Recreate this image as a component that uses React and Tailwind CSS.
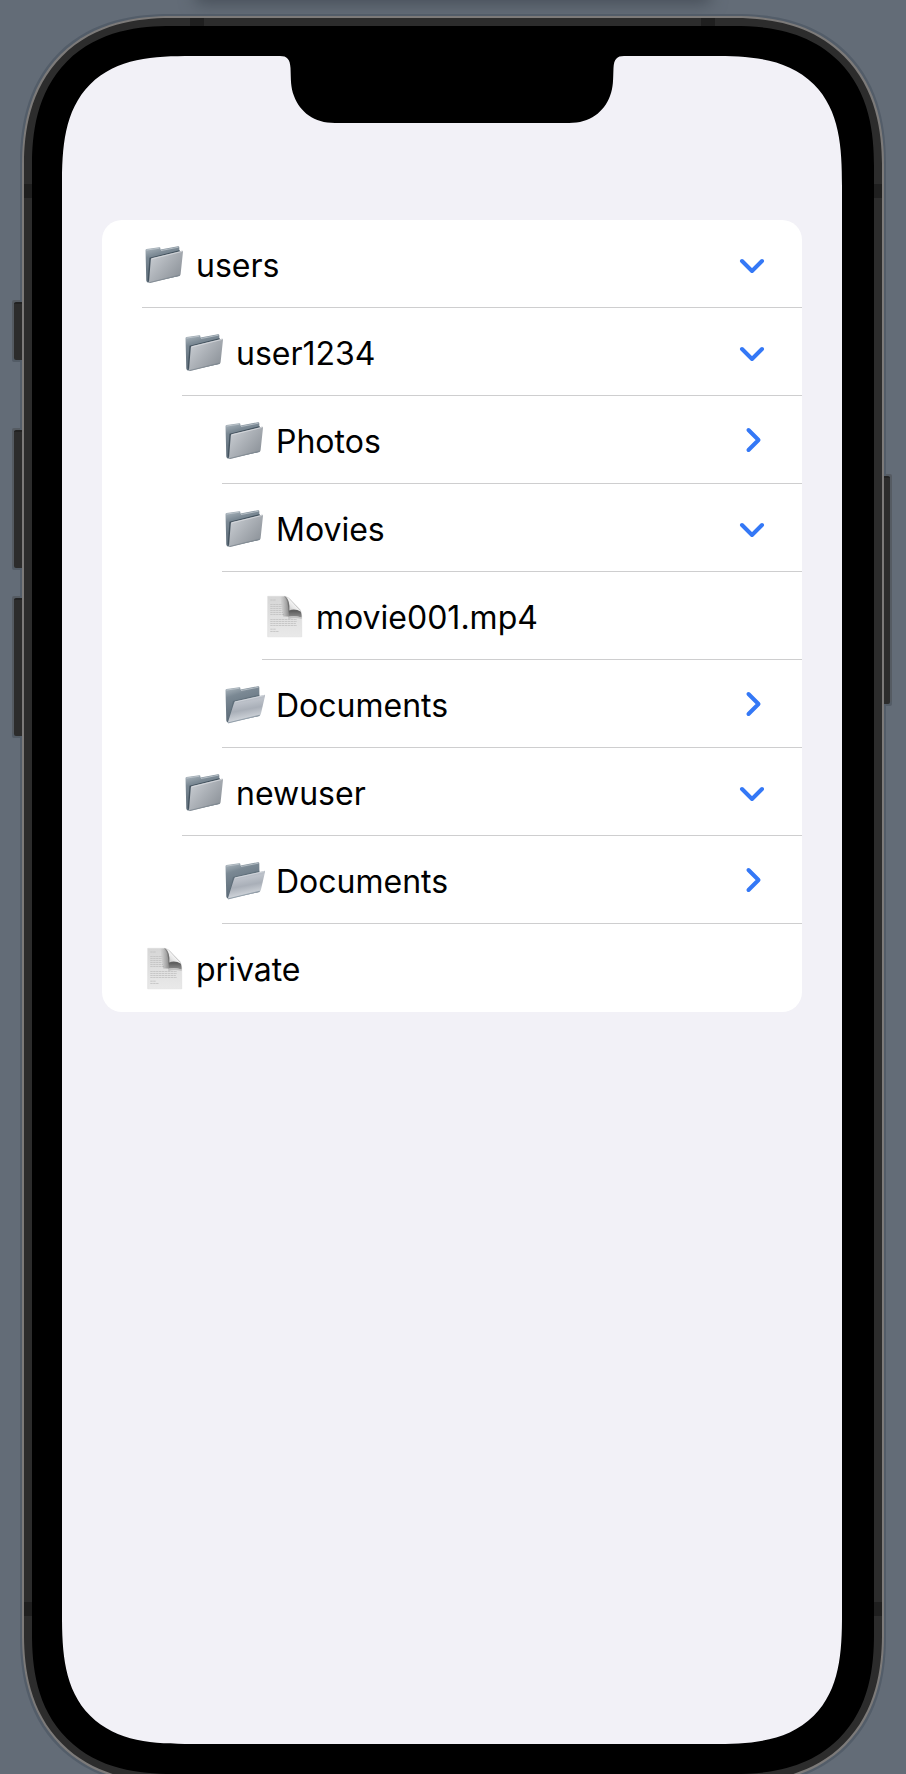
import React, { useId, useState } from 'react';

const entries = [
  { id: 'users', name: 'users', depth: 0, icon: 'folder', chevron: 'down' },
  { id: 'user1234', name: 'user1234', depth: 1, icon: 'folder', chevron: 'down' },
  { id: 'photos', name: 'Photos', depth: 2, icon: 'folder', chevron: 'right' },
  { id: 'movies', name: 'Movies', depth: 2, icon: 'folder', chevron: 'down' },
  { id: 'movie001', name: 'movie001.mp4', depth: 3, icon: 'file' },
  { id: 'docs1', name: 'Documents', depth: 2, icon: 'open', chevron: 'right' },
  { id: 'newuser', name: 'newuser', depth: 1, icon: 'folder', chevron: 'down' },
  { id: 'docs2', name: 'Documents', depth: 2, icon: 'open', chevron: 'right' },
  { id: 'private', name: 'private', depth: 0, icon: 'file' },
];

const indents = ['pl-10', 'pl-20', 'pl-[120px]', 'pl-40'];

function FolderIcon({ open }) {
  const id = useId();
  return (
    <svg viewBox="0 0 42 44" className="h-11 w-[42px] shrink-0 overflow-visible" aria-hidden="true">
      <defs>
        <linearGradient id={id + 'back'} x1="0" y1="0" x2="0.3" y2="1">
          <stop offset="0" stopColor="#b4bec5" />
          <stop offset="0.3" stopColor="#7b8994" />
          <stop offset="1" stopColor="#566572" />
        </linearGradient>
        <linearGradient id={id + 'front'} x1="0" y1="0.1" x2="1" y2="0.9">
          <stop offset="0" stopColor="#ccd0d5" />
          <stop offset="0.45" stopColor="#acb1b7" />
          <stop offset="1" stopColor="#878d94" />
        </linearGradient>
        <linearGradient id={id + 'flap'} x1="0" y1="0" x2="0.25" y2="1">
          <stop offset="0" stopColor="#a2a9b3" />
          <stop offset="0.35" stopColor="#bcc1c9" />
          <stop offset="0.6" stopColor="#a9afb8" />
          <stop offset="1" stopColor="#d9dde2" />
        </linearGradient>
      </defs>
      <path d="M3.5 8.2 Q3.5 7.3 4.4 7.1 L17.2 5.2 Q18.3 5 18.4 6.2 V7.6 L36 4.2 Q37.2 4 37.3 5.2 L37.6 34 L7 40.6 Q4.6 40.8 4.3 38.4 Z" fill={`url(#${id}back)`} />
      <path d="M4.5 8.1 L17.3 6.2 M19 8.5 L36.6 5.2" stroke="#c1c9cf" strokeWidth="0.8" />
      {open ? (
        <>
          <path d="M11 19 L37.4 12.8 L36.6 33.2 L6 41Z" fill="#596874" opacity="0.7" />
          <path d="M12.2 20.4 Q12.5 19.5 13.4 19.3 L42 12.9 Q43.3 12.7 43 13.9 L38.8 32.2 Q38.5 33.3 37.3 33.6 L7.1 41.2 Q5.7 41.4 6 40 Z" fill={`url(#${id}flap)`} />
          <path d="M12.8 20.1 L42.3 13.5" stroke="#d7dbdf" strokeWidth="0.8" />
          <path d="M6 40.9 L37.7 33.2" stroke="#8b98a4" strokeWidth="0.9" />
        </>
      ) : (
        <>
          <path d="M7.5 15.8 L37.3 8.2 L38.8 9.4 L8.5 40.6 L5.8 38Z" fill="#43525e" />
          <path d="M8.8 17.5 Q9 16.4 10 16.1 L39.8 8.7 Q41.2 8.4 41 9.7 L38.6 32.3 Q38.5 33.4 37.3 33.7 L8.2 40.9 Q6.8 41.2 7 39.8 Z" fill={`url(#${id}front)`} />
          <path d="M9.5 17 L40.5 9.3" stroke="#d9dcdf" strokeWidth="0.8" />
          <path d="M7.4 40.6 L37.8 33.1" stroke="#7b858e" strokeWidth="0.8" />
        </>
      )}
    </svg>
  );
}

function FileIcon() {
  const id = useId();
  return (
    <svg viewBox="0 0 42 44" className="h-11 w-[42px] shrink-0" aria-hidden="true">
      <defs>
        <linearGradient id={id + 'page'} x1="0" y1="0" x2="0" y2="1">
          <stop offset="0" stopColor="#d6d6d6" />
          <stop offset="1" stopColor="#e9e9e9" />
        </linearGradient>
        <linearGradient id={id + 'shade'} x1="0" y1="0" x2="1" y2="0">
          <stop offset="0" stopColor="#888" stopOpacity="0" />
          <stop offset="1" stopColor="#6e6e6e" />
        </linearGradient>
        <linearGradient id={id + 'fold'} x1="0" y1="0" x2="0" y2="1">
          <stop offset="0" stopColor="#8a8a8a" />
          <stop offset="0.7" stopColor="#5e5e5e" />
          <stop offset="1" stopColor="#8f8f8f" />
        </linearGradient>
        <linearGradient id={id + 'curl'} x1="0.1" y1="0.9" x2="0.5" y2="0.45">
          <stop offset="0" stopColor="#b8b8b8" />
          <stop offset="0.6" stopColor="#e4e4e4" />
          <stop offset="1" stopColor="#f4f4f4" />
        </linearGradient>
      </defs>
      <path d="M5.7 2.3 H22.5 Q25.5 3 28 5 L38 15.5 Q39.7 18 39.7 22 V42.8 H5.7Z" fill={`url(#${id}page)`} stroke="#dcdcdc" strokeWidth="0.6" />
      <path d="M8.3 6 H14 M8.3 10.5 H20 M8.3 12.5 H20 M8.3 14.5 H20 M8.3 16.5 H20 M8.3 18.5 H21 M8.3 20.5 H22 M8.3 25.5 H35 M8.3 27.5 H35 M8.3 29.5 H34 M8.3 31.5 H35 M8.3 35.2 H14 M8.3 37.5 H17" stroke="#c0c0c0" strokeWidth="0.8" strokeDasharray="2.4 0.5" />
      <path d="M18 2.5 H23 Q27 5 26.5 22.5 H21Z" fill={`url(#${id}shade)`} opacity="0.7" />
      <path d="M22 2.3 Q27 6 26.3 22.7 Q33 20.8 39.7 23.4 Q39.7 18 37.5 15.7 L27.5 5 Q25 2.6 22 2.3Z" fill={`url(#${id}fold)`} />
      <path d="M24 2.8 Q28.2 7 27.3 16.5 Q33 14 39 17.8 L37.5 15.7 L27.5 5 Q26 3.300 24 2.800Z" fill={`url(#${id}curl)`} />
      <path d="M26.3 22.700 Q33 20.8 39.7 23.400 V25 Q33 23.2 26.3 25Z" fill="#b5b5b5" opacity="0.7" />
    </svg>
  );
}

function Chevron({ direction }) {
  return (
    <svg viewBox="0 0 28 28" className="size-7 shrink-0" fill="none" stroke="#3478f6" strokeWidth="4" strokeLinecap="round" strokeLinejoin="round" aria-hidden="true">
      {direction === 'down' ? <path d="M4 11 L14 21 L24 11" /> : <path d="M10.5 4 L20.5 14 L10.5 24" />}
    </svg>
  );
}

function Row({ entry, last, selected, onSelect }) {
  return (
    <li className={indents[entry.depth]}>
      <button
        type="button"
        aria-pressed={selected}
        onClick={onSelect}
        className={`flex h-22 w-full items-center gap-3 pr-9 text-left text-[32px] leading-10 text-black ${last ? '' : 'border-b border-[#cececf]'}`}
      >
        {entry.icon === 'file' ? <FileIcon /> : <FolderIcon open={entry.icon === 'open'} />}
        <span className="flex-1 pt-1">{entry.name}</span>
        {entry.chevron && <Chevron direction={entry.chevron} />}
      </button>
    </li>
  );
}

export default function App() {
  const [selected, setSelected] = useState(null);
  return (
    <main className="relative flex min-h-screen flex-col overflow-hidden bg-[#636c77] px-[22px] pt-4 font-['Inter',sans-serif]">
      <div className="absolute inset-x-[200px] bottom-full h-5 shadow-[0_0_16px_4px_#48505a]" />
      <div className="relative -mb-2.5 flex flex-1 flex-col">
        <div className="flex flex-1 flex-col overflow-hidden rounded-[150px] border-2 border-[#7c7a79] bg-[#2c2c2c] bg-[linear-gradient(to_bottom,transparent_166px,#1f1f1f_166px,#1f1f1f_180px,transparent_180px,transparent_calc(100%-180px),#1f1f1f_calc(100%-180px),#1f1f1f_calc(100%-166px),transparent_calc(100%-166px)),linear-gradient(to_right,transparent_166px,#1f1f1f_166px,#1f1f1f_180px,transparent_180px,transparent_calc(100%-181px),#1f1f1f_calc(100%-181px),#1f1f1f_calc(100%-167px),transparent_calc(100%-167px))] p-2 shadow-[0_0_0_2px_#535d69] [corner-shape:superellipse(1.22)]">
          <div className="flex flex-1 flex-col rounded-[140px] bg-black py-[30px] pr-8 pl-[30px] [corner-shape:superellipse(1.26)]">
            <div className="flex flex-1 flex-col rounded-[130px] bg-[#f2f1f7] px-10 pb-10 [corner-shape:superellipse(1.5)]">
              <svg viewBox="0 0 344 68" className="-mt-px mb-[97px] h-[68px] w-[344px] self-center" aria-hidden="true">
                <path d="M0 0 V1 C7 1 10 4 10.500 13 C11 25 10.500 32 14 41 C20 57 34 68 55 68 H289 C310 68 324 57 330 41 C333.500 32 333 25 333.500 13 C334 4 337 1 344 1 V0Z" fill="#000" />
              </svg>
              <ul aria-label="Files" className="overflow-hidden rounded-[20px] bg-white">
                {entries.map((entry, i) => (
                  <Row
                    key={entry.id}
                    entry={entry}
                    last={i === entries.length - 1}
                    selected={selected === entry.id}
                    onSelect={() => setSelected(entry.id)}
                  />
                ))}
              </ul>
            </div>
          </div>
        </div>
        <div className="absolute inset-y-0 right-full flex w-2 flex-col pt-[286px]">
          <div className="h-[58px] rounded-l-xs border-t-2 border-[#222] bg-[#2c2c2c] shadow-[-2px_-2px_#555b62,-2px_2px_#535c66]" />
          <div className="mt-[70px] h-[138px] rounded-l-xs border-t-2 border-[#222] bg-[#2c2c2c] shadow-[-2px_-2px_#555b62,-2px_2px_#535c66]" />
          <div className="mt-[30px] h-[138px] rounded-l-xs border-t-2 border-[#222] bg-[#2c2c2c] shadow-[-2px_-2px_#555b62,-2px_2px_#535c66]" />
        </div>
        <div className="absolute inset-y-0 left-full flex w-1.5 flex-col pt-[460px]">
          <div className="h-[228px] rounded-r-xs border-t-2 border-[#222] bg-[#2c2c2c] shadow-[2px_-2px_#555b62,2px_2px_#535c66]" />
        </div>
      </div>
    </main>
  );
}
